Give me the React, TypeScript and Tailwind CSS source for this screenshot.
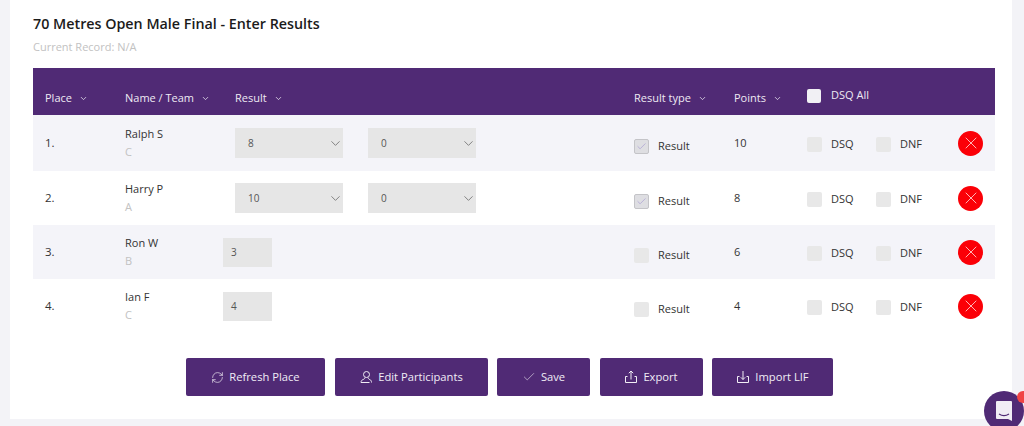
import { Check, ChevronDown, RefreshCw, X } from "lucide-react";
import type { ReactNode } from "react";

type Row = {
  place: string;
  name: string;
  team: string;
  result: string;
  points: string;
  timed: boolean;
};

const rows: Row[] = [
  { place: "1.", name: "Ralph S", team: "C", result: "8", points: "10", timed: true },
  { place: "2.", name: "Harry P", team: "A", result: "10", points: "8", timed: true },
  { place: "3.", name: "Ron W", team: "B", result: "3", points: "6", timed: false },
  { place: "4.", name: "Ian F", team: "C", result: "4", points: "4", timed: false },
];

const columns = "grid grid-cols-[80px_98px_411px_100px_73px_69px_82px_36px] pl-3";

function HeaderCell({ label, className = "" }: { label: string; className?: string }) {
  return (
    <div className={`flex items-center gap-[7px] ${className}`}>
      <span>{label}</span>
      <ChevronDown size={9} strokeWidth={2} />
    </div>
  );
}

function Box({ checked = false }: { checked?: boolean }) {
  if (checked) {
    return (
      <span className="flex h-[15px] w-[15px] items-center justify-center rounded-[2px] border border-[#c4c4c8] bg-[#dedee2]">
        <Check size={11} strokeWidth={1.25} className="text-[#9c8fd0]" />
      </span>
    );
  }
  return <span className="h-[15px] w-[15px] rounded-[2px] bg-[#e8e8e8]" />;
}

function Select({ value }: { value: string }) {
  return (
    <div className="flex h-[30px] w-[108px] items-center justify-between bg-[#e6e6e6] pl-[13px] text-[10px] text-[#555]">
      <span>{value}</span>
      <ChevronDown size={15} strokeWidth={1.25} className="text-[#666]" />
    </div>
  );
}

function ParticipantsIcon() {
  return (
    <svg width="14" height="14" viewBox="0 0 14 14" fill="none" stroke="currentColor" strokeWidth="1">
      <circle cx="7.5" cy="4.5" r="3" />
      <path d="M6 7.5c-.2 1.2-.8 1.6-2.2 2.2C2.6 10.2 2 11 2 12.5h8.5" />
      <path d="M9 7.5c.2 1.2.8 1.6 2 2.2 1 .5 1.5 1.3 1.5 2.8" />
    </svg>
  );
}

function TrayIcon({ up }: { up: boolean }) {
  return (
    <svg width="14" height="14" viewBox="0 0 14 14" fill="none" stroke="currentColor" strokeWidth="1">
      <path d="M3.5 6.5H1.5v6h11v-6h-2" />
      {up ? <path d="M7 9.5V1M4.8 3.2 7 1l2.2 2.2" /> : <path d="M7 1v8.5M4.8 7.3 7 9.5l2.2-2.2" />}
    </svg>
  );
}

function ActionButton({ icon, label, width }: { icon: ReactNode; label: string; width: string }) {
  return (
    <button className={`flex h-[38px] items-center justify-center gap-[5px] rounded-[2px] bg-[#502a75] text-[11.2px] font-medium text-[#f1edf5] ${width}`}>
      {icon}
      {label}
    </button>
  );
}

export default function App() {
  return (
    <div className="relative h-[426px] w-[1024px] overflow-hidden bg-[#f3f3f7] font-['Open_Sans',sans-serif]">
      <div className="ml-[10px] h-[419px] w-[1002px] bg-white pl-[23px] pt-[15px]">
        <h1 className="text-[14.3px] font-semibold leading-[18px] text-[#1b1b1b]">70 Metres Open Male Final - Enter Results</h1>
        <p className="mt-[6px] text-[11px] leading-[16px] text-[#c2c2c2]">Current Record: N/A</p>

        <div className="mt-[13px] w-[962px]">
          <div className={`${columns} h-[47px] items-center bg-[#502a75] text-[11px] text-[#eee9f3]`}>
            <HeaderCell label="Place" className="pt-[13px]" />
            <HeaderCell label="Name / Team" className="pt-[13px]" />
            <HeaderCell label="Result" className="pl-3 pt-[13px]" />
            <HeaderCell label="Result type" className="pt-[13px]" />
            <HeaderCell label="Points" className="pt-[13px]" />
            <div className="col-span-3 flex items-center gap-[10px] pt-[8px]">
              <span className="h-[14px] w-[14px] rounded-[2px] bg-[#f1f0f4]" />
              <span>DSQ All</span>
            </div>
          </div>

          {rows.map((row, i) => (
            <div
              key={row.place}
              className={`${columns} items-center text-[11px] text-[#333] ${i === 0 ? "h-[56px]" : "h-[54px]"} ${i % 2 === 0 ? "bg-[#f4f4f9]" : "bg-white"}`}
            >
              <div className="text-[11.5px]">{row.place}</div>
              <div className="leading-[18px]">
                <div>{row.name}</div>
                <div className="text-[#c2c2c2]">{row.team}</div>
              </div>
              {row.timed ? (
                <div className="flex gap-[25px] pl-3">
                  <Select value={row.result} />
                  <Select value="0" />
                </div>
              ) : (
                <div className="flex h-[29px] w-[49px] items-center bg-[#e6e6e6] pl-[8px] text-[10px] text-[#555]">{row.result}</div>
              )}
              <div className="flex items-center gap-[9px] pt-[7px]">
                <Box checked={row.timed} />
                <span>Result</span>
              </div>
              <div>{row.points}</div>
              <div className="flex items-center gap-[9px] pt-[2px]">
                <Box />
                <span>DSQ</span>
              </div>
              <div className="flex items-center gap-[9px] pt-[2px]">
                <Box />
                <span>DNF</span>
              </div>
              <div className="flex h-[25px] w-[25px] items-center justify-center rounded-full bg-[#fb0007]">
                <X size={20} strokeWidth={1} className="text-[#ffd9d9]" />
              </div>
            </div>
          ))}

          <div className="mt-[25px] flex justify-center gap-[9.5px] pr-[9px]">
            <ActionButton width="w-[139px]" label="Refresh Place" icon={<RefreshCw size={13} strokeWidth={1.25} />} />
            <ActionButton width="w-[153px]" label="Edit Participants" icon={<ParticipantsIcon />} />
            <ActionButton width="w-[93px]" label="Save" icon={<Check size={14} strokeWidth={1} />} />
            <ActionButton width="w-[103px]" label="Export" icon={<TrayIcon up />} />
            <ActionButton width="w-[121px]" label="Import LIF" icon={<TrayIcon up={false} />} />
          </div>
        </div>
      </div>

      {/* chat launcher */}
      <div className="absolute left-[984px] top-[391px] flex h-[40px] w-[40px] items-center justify-center rounded-full bg-[#502a75]">
        <svg width="18" height="22" viewBox="0 0 18 22">
          <path d="M2 1h14a1 1 0 0 1 1 1v19l-4-2H2a1 1 0 0 1-1-1V2a1 1 0 0 1 1-1z" fill="#f1edf5" />
          <path d="M4 14c3 2 7 2 10 0" fill="none" stroke="#502a75" strokeWidth="1.2" />
        </svg>
      </div>
      <div className="absolute left-[1017px] top-[391px] h-[12px] w-[12px] rounded-full bg-[#f04444]" />
    </div>
  );
}
